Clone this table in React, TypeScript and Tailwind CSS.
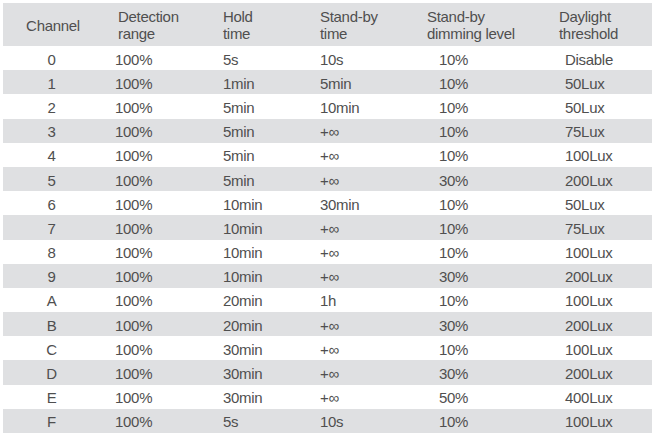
const rows: string[][] = [
  ['0', '100%', '5s', '10s', '10%', 'Disable'],
  ['1', '100%', '1min', '5min', '10%', '50Lux'],
  ['2', '100%', '5min', '10min', '10%', '50Lux'],
  ['3', '100%', '5min', '+∞', '10%', '75Lux'],
  ['4', '100%', '5min', '+∞', '10%', '100Lux'],
  ['5', '100%', '5min', '+∞', '30%', '200Lux'],
  ['6', '100%', '10min', '30min', '10%', '50Lux'],
  ['7', '100%', '10min', '+∞', '10%', '75Lux'],
  ['8', '100%', '10min', '+∞', '10%', '100Lux'],
  ['9', '100%', '10min', '+∞', '30%', '200Lux'],
  ['A', '100%', '20min', '1h', '10%', '100Lux'],
  ['B', '100%', '20min', '+∞', '30%', '200Lux'],
  ['C', '100%', '30min', '+∞', '10%', '100Lux'],
  ['D', '100%', '30min', '+∞', '30%', '200Lux'],
  ['E', '100%', '30min', '+∞', '50%', '400Lux'],
  ['F', '100%', '5s', '10s', '10%', '100Lux'],
];

export default function App() {
  return (
    <div
      className="w-[654px] h-[440px] bg-white pt-[3px] pl-[3px] pr-[2px] text-[#4f4f4f] tracking-[-0.3px]"
      style={{ fontFamily: '"Liberation Sans", Arial, sans-serif' }}
    >
      {/* Header */}
      <div className="flex h-[43px] items-center bg-[#dfe0e2] pt-[1px] text-[15px] leading-[17px]">
        <div className="w-[100px] text-center">Channel</div>
        <div className="w-[105px] pl-[15px]">Detection<br />range</div>
        <div className="w-[97px] pl-[15px]">Hold<br />time</div>
        <div className="w-[107px] pl-[15px]">Stand-by<br />time</div>
        <div className="w-[132px] pl-[15px]">Stand-by<br />dimming level</div>
        <div className="flex-1 pl-[15px]">Daylight<br />threshold</div>
      </div>

      {/* Rows */}
      {rows.map((r, i) => (
        <div
          key={r[0]}
          className={`flex h-[24.2px] items-center pt-[2px] text-[15px] leading-none ${i % 2 === 1 ? 'bg-[#dfe0e2]' : 'bg-white'}`}
        >
          <div className="w-[97px] text-center">{r[0]}</div>
          <div className="w-[108px] pl-[15px]">{r[1]}</div>
          <div className="w-[97px] pl-[15px]">{r[2]}</div>
          <div className="w-[107px] pl-[15px]">{r[3]}</div>
          <div className="w-[132px] pl-[27px]">{r[4]}</div>
          <div className="flex-1 pl-[21px]">{r[5]}</div>
        </div>
      ))}
    </div>
  );
}
